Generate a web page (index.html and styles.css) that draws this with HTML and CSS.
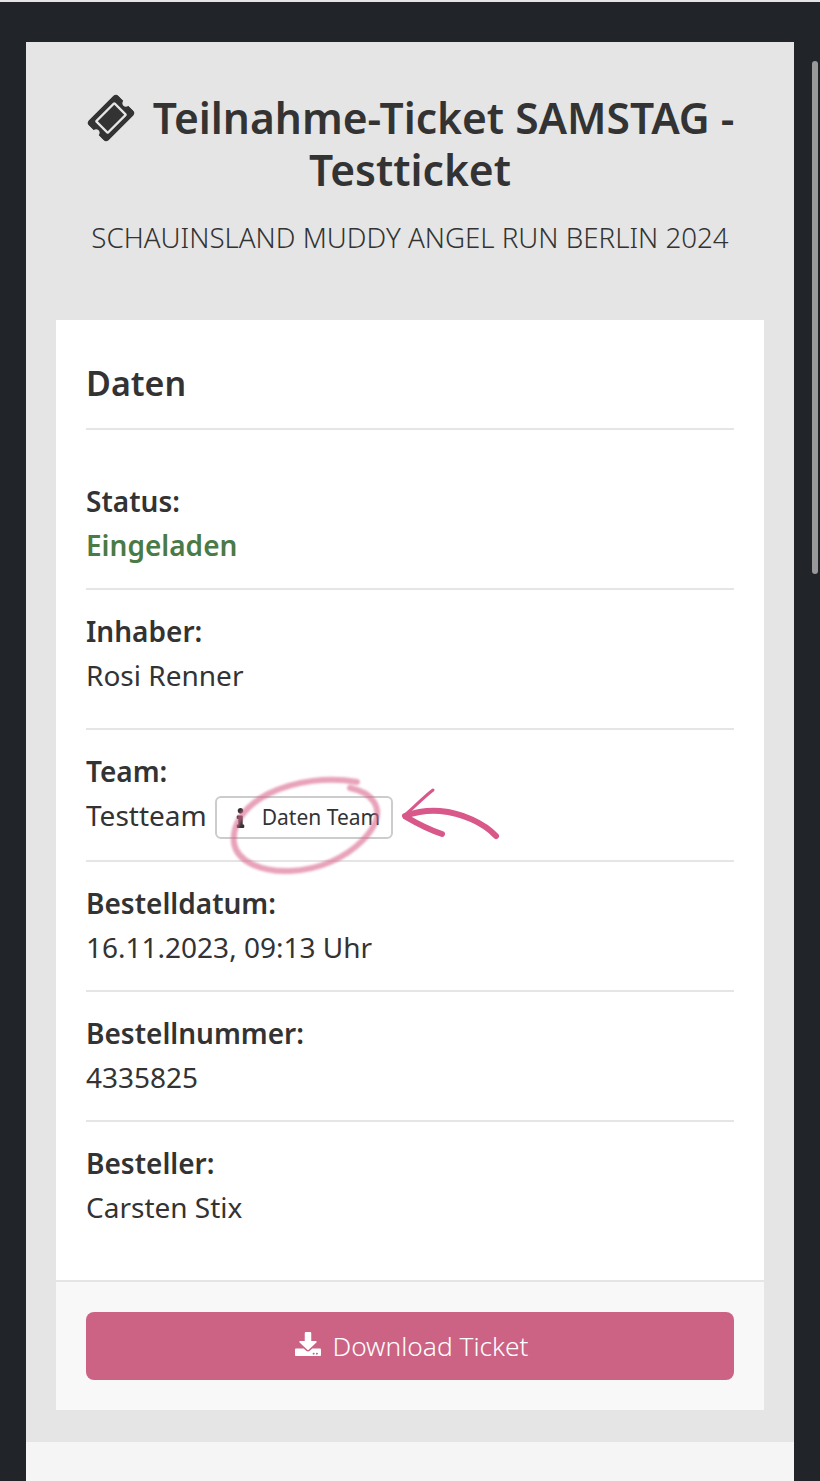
FILE: index.html
```html
<!DOCTYPE html>
<html lang="de">
<head>
    <meta charset="utf-8">
    <title>Teilnahme-Ticket</title>
    <link rel="stylesheet" href="styles.css">
</head>
<body>
    <div class="container">
        <div class="ticket-panel">
            <div class="ticket-header">
                <h1>
                    <svg class="ticket-icon" viewBox="0 0 576 512"><path d="M128 160h320v192H128V160zm400 96c0 26.51 21.49 48 48 48v96c0 26.51-21.49 48-48 48H48c-26.51 0-48-21.49-48-48v-96c26.51 0 48-21.49 48-48s-21.49-48-48-48v-96c0-26.51 21.49-48 48-48h480c26.51 0 48 21.49 48 48v96c-26.51 0-48 21.49-48 48zm-48-104c0-13.255-10.745-24-24-24H120c-13.255 0-24 10.745-24 24v208c0 13.255 10.745 24 24 24h336c13.255 0 24-10.745 24-24V152z"/></svg>
                    Teilnahme-Ticket SAMSTAG - Testticket
                </h1>
                <p class="event-name">SCHAUINSLAND MUDDY ANGEL RUN BERLIN 2024</p>
            </div>

            <div class="data-card">
                <div class="data-body">
                    <h2>Daten</h2>
                    <div class="data-row first-row">
                        <strong>Status:</strong>
                        <span class="status-ok">Eingeladen</span>
                    </div>
                    <div class="data-row tall-row">
                        <strong>Inhaber:</strong>
                        <span>Rosi Renner</span>
                    </div>
                    <div class="data-row team-row">
                        <strong>Team:</strong>
                        <div class="team-value">
                            <span>Testteam</span>
                            <a class="btn-small">
                                <svg class="info-icon" viewBox="0 0 192 512"><path d="M20 424.229h20V279.771H20c-11.046 0-20-8.954-20-20V212c0-11.046 8.954-20 20-20h112c11.046 0 20 8.954 20 20v212.229h20c11.046 0 20 8.954 20 20V492c0 11.046-8.954 20-20 20H20c-11.046 0-20-8.954-20-20v-47.771c0-11.046 8.954-20 20-20zM96 0C56.235 0 24 32.235 24 72s32.235 72 72 72 72-32.235 72-72S135.764 0 96 0z"/></svg>
                                Daten Team
                            </a>
                        </div>
                    </div>
                    <div class="data-row">
                        <strong>Bestelldatum:</strong>
                        <span>16.11.2023, 09:13 Uhr</span>
                    </div>
                    <div class="data-row">
                        <strong>Bestellnummer:</strong>
                        <span>4335825</span>
                    </div>
                    <div class="data-row last-row">
                        <strong>Besteller:</strong>
                        <span>Carsten Stix</span>
                    </div>
                </div>
                <div class="data-footer">
                    <a class="btn-download">
                        <svg class="download-icon" viewBox="0 0 512 512" preserveAspectRatio="none"><path d="M216 0h80c13.3 0 24 10.7 24 24v168h87.7c17.8 0 26.7 21.5 14.1 34.1L269.7 378.3c-7.5 7.5-19.8 7.5-27.3 0L90.1 226.1c-12.6-12.6-3.7-34.1 14.1-34.1H192V24c0-13.3 10.7-24 24-24zm296 376v112c0 13.3-10.7 24-24 24H24c-13.3 0-24-10.7-24-24V376c0-13.3 10.7-24 24-24h146.7l49 49c20.1 20.1 52.5 20.1 72.6 0l49-49H488c13.3 0 24 10.7 24 24zm-124 88c0-11-9-20-20-20s-20 9-20 20 9 20 20 20 20-9 20-20zm64 0c0-11-9-20-20-20s-20 9-20 20 9 20 20 20 20-9 20-20z"/></svg>
                        Download Ticket
                    </a>
                </div>
            </div>
        </div>
        <div class="next-panel"></div>
    </div>

    <div class="scroll-thumb"></div>

    <!-- hand drawn marker on top of the screenshot -->
    <svg class="marker" viewBox="0 0 820 1481">
        <path class="marker-ring" d="M357 782C330 777 296 780 268 794C243 807 232 825 234 843C237 862 262 872 290 871C320 870 346 857 362 841C376 827 381 813 374 802C369 794 360 790 350 788"/>
        <path class="marker-arrow" d="M496 836C484 823 462 813 440 811C428 810 416 812 405 816"/>
        <path class="marker-arrow" d="M406 817C418 824 430 830 442 834"/>
        <path class="marker-arrow thin" d="M405 815C414 807 424 797 433 790"/>
    </svg>
</body>
</html>
```

FILE: styles.css
```css
html, body {
    height: 100%;
    overflow: hidden;
}

body {
    margin: 0;
    font-family: "Noto Sans", "Open Sans", sans-serif;
    font-size: 28px;
    line-height: 44px;
    color: #333;
    background-color: #212529;
    border-top: 2px solid #e5e5e5;
    box-sizing: border-box;
}

.container {
    margin: 40px 26px 0;
}

.ticket-panel {
    background-color: #e5e5e5;
    padding: 0 30px 32px;
}

.ticket-header {
    text-align: center;
    padding: 50px 0 0;
    height: 278px;
    box-sizing: border-box;
}

h1 {
    margin: 0;
    font-size: 42.5px;
    line-height: 52px;
    font-weight: 600;
}

.ticket-icon {
    width: 42px;
    height: 42px;
    fill: #333;
    transform: rotate(-45deg);
    vertical-align: -5px;
    margin: 0 9.5px 0 4.5px;
}

.event-name {
    margin: 19px 0 0;
    font-size: 27.7px;
    line-height: 44px;
    font-weight: 300;
}

.data-card {
    background-color: #fff;
}

.data-body {
    padding: 40px 30px 30px;
}

h2 {
    margin: 0;
    font-size: 34px;
    line-height: 46px;
    font-weight: 600;
    padding-bottom: 22px;
    border-bottom: 2px solid #e5e5e5;
}

.data-row {
    display: flex;
    flex-direction: column;
    padding: 19px 0 21px;
    border-bottom: 2px solid #e5e5e5;
}

.data-row strong {
    font-weight: 600;
}

.first-row {
    padding-top: 49px;
}

.tall-row {
    padding-bottom: 31px;
}

.team-row {
    padding-bottom: 23px;
}

.last-row {
    border-bottom: none;
}

.status-ok {
    color: #4a7a45;
    font-weight: 600;
}

.team-value {
    display: flex;
    gap: 9px;
    height: 44px;
}

.btn-small {
    display: flex;
    align-items: center;
    box-sizing: border-box;
    height: 43px;
    margin: 3px 0 0 -1px;
    padding: 0 11px 0 19px;
    font-size: 21px;
    line-height: 39px;
    border: 2px solid #ccc;
    border-radius: 6px;
}

.info-icon {
    width: 9px;
    height: 20px;
    fill: #333;
    margin-right: 17px;
}

.data-footer {
    background-color: #f8f8f8;
    border-top: 2px solid #e5e5e5;
    padding: 30px;
}

.btn-download {
    display: flex;
    align-items: center;
    justify-content: center;
    box-sizing: border-box;
    height: 68px;
    padding-left: 4px;
    font-size: 26.3px;
    font-weight: 300;
    color: #fff;
    background-color: #cc6384;
    border-radius: 8px;
}

.download-icon {
    width: 26px;
    height: 24px;
    fill: #fff;
    margin: 0 11px 5px 0;
}

.next-panel {
    height: 100px;
    background-color: #f5f5f5;
}

.scroll-thumb {
    position: absolute;
    top: 61px;
    left: 812px;
    width: 6px;
    height: 513px;
    border-radius: 3px;
    background-color: #999;
}

.marker {
    position: absolute;
    top: 0;
    left: 0;
    width: 820px;
    height: 1481px;
    fill: none;
    pointer-events: none;
}

.marker-ring {
    stroke: #d9668e;
    stroke-width: 6;
    stroke-linecap: round;
    opacity: 0.6;
    filter: blur(0.8px);
}

.marker-arrow {
    stroke: #d9588a;
    stroke-width: 6;
    stroke-linecap: round;
    filter: blur(0.4px);
}

.marker-arrow.thin {
    stroke-width: 3;
}
```
